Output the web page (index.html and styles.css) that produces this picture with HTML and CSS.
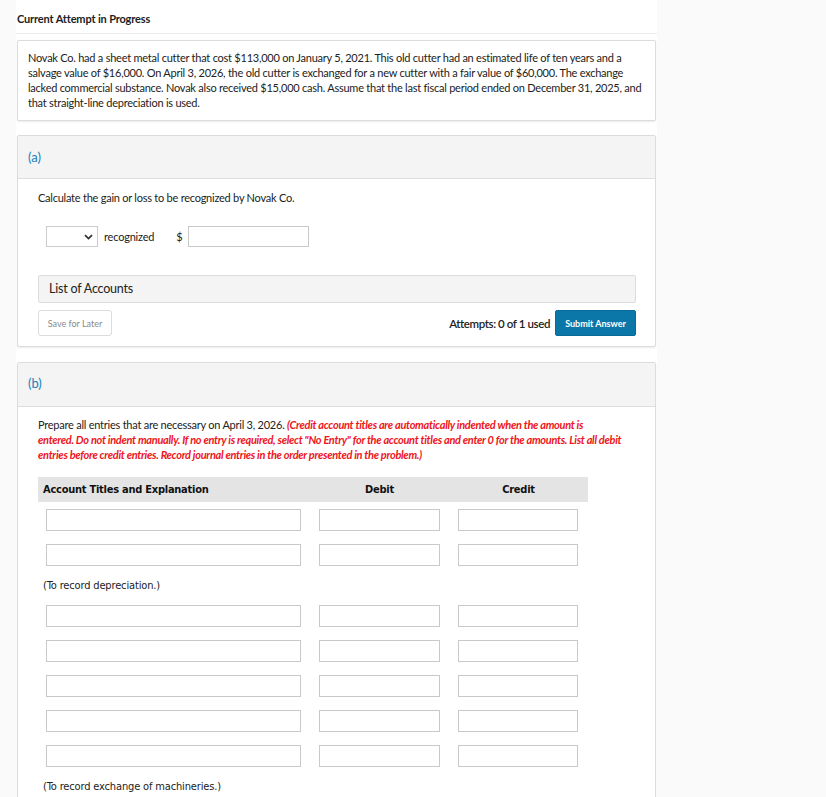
FILE: index.html
```html
<!DOCTYPE html>
<html lang="en">
<head>
<meta charset="utf-8">
<title>Current Attempt in Progress</title>
<link rel="stylesheet" href="styles.css">
</head>
<body>
<div class="page">
  <div class="top">Current Attempt in Progress</div>

  <div class="card problem">
    Novak Co. had a sheet metal cutter that cost $113,000 on January 5, 2021. This old cutter had an estimated life of ten years and a salvage value of $16,000. On April 3, 2026, the old cutter is exchanged for a new cutter with a fair value of $60,000. The exchange lacked commercial substance. Novak also received $15,000 cash. Assume that the last fiscal period ended on December 31, 2025, and that straight-line depreciation is used.
  </div>

  <div class="card part part-a">
    <div class="part-head">(a)</div>
    <div class="part-body">
      <p class="question">Calculate the gain or loss to be recognized by Novak Co.</p>
      <div class="answer-row">
        <div class="select">
          <svg width="9" height="6" viewBox="0 0 9 6"><path d="M1 1.2 L4.5 4.6 L8 1.2" fill="none" stroke="#333" stroke-width="1.8"/></svg>
        </div>
        <span class="rec">recognized</span>
        <span class="dollar">$</span>
        <div class="input amount"></div>
      </div>
      <div class="accounts">List of Accounts</div>
      <div class="actions">
        <button class="save">Save for Later</button>
        <div class="right">
          <span class="attempts">Attempts: 0 of 1 used</span>
          <button class="submit">Submit Answer</button>
        </div>
      </div>
    </div>
  </div>

  <div class="card part part-b">
    <div class="part-head">(b)</div>
    <div class="part-body">
      <p class="question">Prepare all entries that are necessary on April 3, 2026. <em class="warn">(Credit account titles are automatically indented when the amount is<br>entered. Do not indent manually. If no entry is required, select "No Entry" for the account titles and enter 0 for the amounts. List all debit entries before credit entries. Record journal entries in the order presented in the problem.)</em></p>
      <div class="journal">
        <div class="jhead">
          <div class="c1">Account Titles and Explanation</div>
          <div class="c2">Debit</div>
          <div class="c3">Credit</div>
        </div>
        <div class="jrow"><div class="input t"></div><div class="input d"></div><div class="input k"></div></div>
        <div class="jrow"><div class="input t"></div><div class="input d"></div><div class="input k"></div></div>
        <div class="jnote">(To record depreciation.)</div>
        <div class="jrow"><div class="input t"></div><div class="input d"></div><div class="input k"></div></div>
        <div class="jrow"><div class="input t"></div><div class="input d"></div><div class="input k"></div></div>
        <div class="jrow"><div class="input t"></div><div class="input d"></div><div class="input k"></div></div>
        <div class="jrow"><div class="input t"></div><div class="input d"></div><div class="input k"></div></div>
        <div class="jrow"><div class="input t"></div><div class="input d"></div><div class="input k"></div></div>
        <div class="jnote">(To record exchange of machineries.)</div>
      </div>
    </div>
  </div>
</div>
</body>
</html>
```
FILE: styles.css
```css
html, body {
  margin: 0;
  padding: 0;
  background: #fafafa;
}
body {
  font-family: Lato, "Open Sans", sans-serif;
  color: #222;
}
.page {
  margin-left: 16px;
  width: 641px;
  background: #fff;
  min-height: 797px;
}
.top {
  height: 33px;
  line-height: 38px;
  border-bottom: 1px solid #ececec;
  font-size: 11px;
  font-weight: 700;
  padding-left: 1px;
  color: #222;
  letter-spacing: -0.15px;
}
.card {
  margin: 0 1px;
  border: 1px solid #dcdcdc;
  border-radius: 2px;
  box-shadow: 0 1px 2px rgba(0,0,0,0.08);
  background: #fff;
}
.problem {
  margin-top: 6px;
  padding: 9px 10px 10px 10px;
  font-size: 11px;
  line-height: 15px;
  color: #222;
  letter-spacing: -0.24px;
}
.part-a {
  margin-top: 14px;
}
.part-b {
  margin-top: 15px;
}
.part-head {
  background: #f4f4f4;
  border-bottom: 1px solid #dedede;
  height: 42px;
  line-height: 42px;
  padding-left: 10px;
  font-size: 13px;
  color: #1a7fbd;
}
.part-b .part-head {
  height: 43px;
  line-height: 41px;
}
.part-body {
  padding: 10px 19px 10px 20px;
}
.question {
  margin: 0;
  font-size: 11px;
  line-height: 15px;
  color: #222;
  letter-spacing: -0.24px;
}
.part-a .question {
  padding-top: 1px;
}
.answer-row {
  display: flex;
  align-items: center;
  margin-top: 21px;
  padding-left: 8px;
  height: 21px;
  font-size: 11px;
  letter-spacing: -0.2px;
}
.select {
  width: 50px;
  height: 19px;
  border: 1px solid #ccc;
  display: flex;
  align-items: center;
  justify-content: flex-end;
  box-sizing: content-box;
}
.select svg {
  margin-right: 4px;
}
.rec {
  margin-left: 6px;
}
.dollar {
  margin-left: 22px;
}
.input {
  border: 1px solid #c9c9c9;
  background: #fff;
  box-sizing: border-box;
}
.amount {
  margin-left: 6px;
  width: 121px;
  height: 21px;
}
.accounts {
  margin-top: 28px;
  height: 28px;
  box-sizing: border-box;
  border: 1px solid #dcdcdc;
  border-radius: 2px;
  background: #f4f4f4;
  padding-left: 10px;
  line-height: 26px;
  font-size: 12.5px;
  color: #222;
  letter-spacing: -0.2px;
}
.actions {
  margin-top: 7px;
  display: flex;
  justify-content: space-between;
  align-items: center;
}
.save {
  width: 74px;
  height: 26px;
  border: 1px solid #dcdcdc;
  border-radius: 3px;
  background: #fff;
  font-family: Lato, sans-serif;
  font-size: 9px;
  color: #8a8a8a;
  padding: 0;
}
.right {
  display: flex;
  align-items: center;
}
.attempts {
  font-size: 11.5px;
  font-weight: 600;
  color: #222;
  margin-right: 5px;
  letter-spacing: -0.4px;
}
.submit {
  width: 81px;
  height: 26px;
  border: 1px solid #0a6a98;
  border-radius: 2px;
  background: #0b76a8;
  color: #fff;
  font-family: Lato, sans-serif;
  font-weight: 700;
  font-size: 9px;
  padding: 0;
}
.part-b .question {
  padding-top: 0;
  padding-right: 4px;
}
.warn {
  color: #ee1520;
  font-weight: 700;
  font-style: italic;
  letter-spacing: -0.3px;
}
.journal {
  margin-top: 15px;
  width: 550px;
  font-family: "DejaVu Sans Condensed", "DejaVu Sans", sans-serif;
}
.jhead {
  display: grid;
  grid-template-columns: 272px 139px 139px;
  background: #e4e4e4;
  height: 25px;
  line-height: 25px;
  font-size: 11px;
  font-weight: 700;
  color: #111;
  letter-spacing: -0.25px;
}
.jhead .c1 {
  padding-left: 5px;
}
.jhead .c2, .jhead .c3 {
  text-align: center;
}
.jrow {
  display: grid;
  grid-template-columns: 272px 139px 139px;
  height: 35px;
  padding-top: 7px;
  box-sizing: border-box;
}
.jrow .input {
  height: 22px;
}
.jrow .t {
  margin-left: 8px;
  width: 255px;
}
.jrow .d {
  margin-left: 9px;
  width: 121px;
}
.jrow .k {
  margin-left: 9px;
  width: 120px;
}
.jnote {
  height: 24px;
  padding-top: 2px;
  line-height: 24px;
  padding-left: 5px;
  font-size: 11px;
  color: #222;
  letter-spacing: -0.15px;
}
```
